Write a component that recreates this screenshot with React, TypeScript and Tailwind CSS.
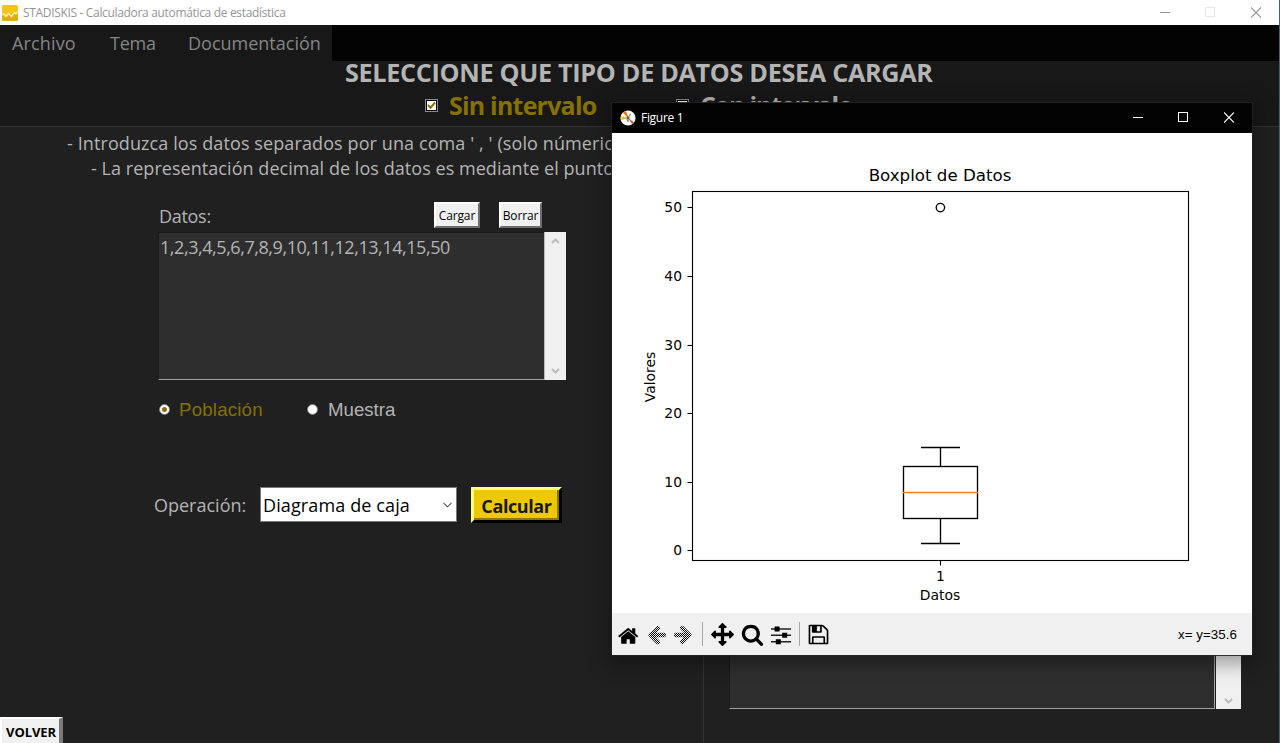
import React from "react";

const PATHS = {
  home: "M1408 992v480q0 26-19 45t-45 19h-384v-384h-256v384h-384q-26 0-45-19t-19-45v-480q0-1 .5-3t.5-3l575-474 575 474q1 2 1 6zm223-69l-62 74q-8 9-21 11h-3q-13 0-21-7l-692-577-692 577q-12 8-24 7-13-2-21-11l-62-74q-8-10-7-23.5t11-21.5l719-599q32-26 76-26t76 26l244 204v-195q0-14 9-23t23-9h192q14 0 23 9t9 23v408l219 182q10 8 11 21.5t-7 23.5z",
  arrow: "M1664 896v128q0 53-32.5 90.5t-84.5 37.5h-704l293 294q38 36 38 90t-38 90l-75 76q-37 37-90 37-52 0-91-37l-651-652q-37-37-37-90 0-52 37-91l651-650q38-38 91-38 52 0 90 38l75 74q38 38 38 91t-38 91l-293 293h704q52 0 84.5 37.5t32.5 90.5z",
  move: "M1792 896q0 26-19 45l-256 256q-19 19-45 19t-45-19-19-45v-128h-384v384h128q26 0 45 19t19 45-19 45l-256 256q-19 19-45 19t-45-19l-256-256q-19-19-19-45t19-45 45-19h128v-384h-384v128q0 26-19 45t-45 19-45-19l-256-256q-19-19-19-45t19-45l256-256q19-19 45-19t45 19 19 45v128h384v-384h-128q-26 0-45-19t-19-45 19-45l256-256q19-19 45-19t45 19l256 256q19 19 19 45t-19 45-45 19h-128v384h384v-128q0-26 19-45t45-19 45 19l256 256q19 19 19 45z",
  search: "M1216 832q0-185-131.5-316.5t-316.5-131.5-316.5 131.5-131.5 316.5 131.5 316.5 316.5 131.5 316.5-131.5 131.5-316.5zm512 832q0 52-38 90t-90 38q-54 0-90-38l-343-342q-179 124-399 124-143 0-273.5-55.5t-225-150-150-225-55.5-273.5 55.5-273.5 150-225 225-150 273.5-55.5 273.5 55.5 225 150 150 225 55.5 273.5q0 220-124 399l343 343q37 37 37 90z",
  save: "M512 1536h768v-384h-768v384zm896 0h128v-896q0-14-10-38.5t-20-34.5l-281-281q-10-10-34-20t-39-10v416q0 40-28 68t-68 28h-576q-40 0-68-28t-28-68v-416h-128v1280h128v-416q0-40 28-68t68-28h832q40 0 68 28t28 68v416zm-384-928v-320q0-13-9.5-22.5t-22.5-9.5h-192q-13 0-22.5 9.5t-9.5 22.5v320q0 13 9.5 22.5t22.5 9.5h192q13 0 22.5-9.5t9.5-22.5zm640 32v928q0 40-28 68t-68 28h-1344q-40 0-68-28t-28-68v-1344q0-40 28-68t68-28h928q40 0 88 20t76 48l280 280q28 28 48 76t20 88z",
};

function ToolIcon({ d, className }: { d: string; className: string }) {
  return (
    <svg viewBox="0 0 1792 1792" className={className} fill="#000">
      <path d={d} />
    </svg>
  );
}

/* Disabled navigation arrow, stippled one pixel on, one pixel off */
function StippledArrow({ flip, id }: { flip?: boolean; id: string }) {
  const dots: string[] = [];
  for (let y = 0; y < 22; y++) {
    for (let x = y % 2; x < 22; x += 2) dots.push(`M${x} ${y}h1v1h-1z`);
  }
  return (
    <svg width="22" height="22" viewBox="0 0 22 22" className="shrink-0">
      <clipPath id={id}>
        <path d={PATHS.arrow} transform={flip ? "translate(21 -0.5) scale(-0.0120 0.0120)" : "translate(1 -0.5) scale(0.0120)"} />
      </clipPath>
      <g clipPath={`url(#${id})`}>
        <path d={dots.join("")} shapeRendering="crispEdges" />
      </g>
    </svg>
  );
}

function WindowButtons({ stroke, muted, className }: { stroke: string; muted: string; className: string }) {
  return (
    <div className={className}>
      <svg width="10" height="11" shapeRendering="crispEdges"><path d="M0 5.5h10" stroke={stroke} /></svg>
      <svg width="10" height="11" shapeRendering="crispEdges" className="ml-[35px]"><rect x=".5" y=".5" width="9" height="9" fill="none" stroke={muted} /></svg>
      <svg width="10" height="11" className="ml-9"><path d="M0 .5l10 10M10 .5l-10 10" stroke={stroke} strokeWidth="1.1" /></svg>
    </div>
  );
}

function ScrollArrow({ down }: { down?: boolean }) {
  return (
    <svg width="9" height="8" viewBox="0 0 9 8" fill="none" stroke="#bdbdbd" strokeWidth="2">
      <path d={down ? "M1 2l3.5 3.5L8 2" : "M1 6l3.5-3.5L8 6"} />
    </svg>
  );
}

const TICKS = [
  { v: 50, y: 74.5 },
  { v: 40, y: 143.5 },
  { v: 30, y: 212.5 },
  { v: 20, y: 280.5 },
  { v: 10, y: 349.5 },
  { v: 0, y: 417.5 },
];

function Boxplot() {
  return (
    <svg width="640" height="480" viewBox="0 0 640 480" className="block bg-white font-['DejaVu_Sans',sans-serif]">
      <g fill="none" stroke="#000" strokeWidth="1.1">
        <rect x="80.5" y="58.5" width="496" height="369" />
        {TICKS.map((t) => (
          <path key={t.v} d={`M75.5 ${t.y}h5`} />
        ))}
        <path d="M328.5 427.5v5" />
      </g>
      <g fill="none" stroke="#000" strokeWidth="1.35">
        <rect x="291.5" y="333.5" width="74" height="52" />
        <path d="M328.5 333.5v-19M309 314.5h39M328.5 385.5v25M309 410.5h39" />
        <circle cx="328.4" cy="74.6" r="4.2" />
      </g>
      <path d="M291 359.5h75" stroke="#ff7f0e" strokeWidth="1.35" />
      <g fontSize="13.89" textAnchor="end" fill="#000">
        {TICKS.map((t) => (
          <text key={t.v} x="70" y={t.y + 4.9}>{t.v}</text>
        ))}
      </g>
      <g fontSize="13.89" textAnchor="middle" fill="#000">
        <text x="328.5" y="448">1</text>
        <text x="328" y="467">Datos</text>
        <text transform="translate(43 244) rotate(-90)">Valores</text>
        <text x="328" y="48.400" fontSize="16.67">Boxplot de Datos</text>
      </g>
    </svg>
  );
}

function FigureWindow() {
  return (
    <div className="absolute left-[612px] top-[103px] flex w-[640px] flex-col shadow-[0_0_0_1px_rgba(34,34,34,0.9),0_5px_18px_4px_rgba(0,0,0,0.35)]">
      <div className="flex h-[30px] items-center justify-between bg-[#030303] pl-2 pr-[18px]">
        <div className="flex items-center gap-[5px]">
          <svg width="16" height="16" viewBox="0 0 16 16">
            <circle cx="8" cy="8" r="7.6" fill="#fff" />
            <path d="M8.500 8L2.800 2.800 6 1z" fill="#f26b12" />
            <path d="M8 8L1.200 6.300 1.500 9.900z" fill="#f5b800" />
            <path d="M8 8l6 4.400-1.800 1.600z" fill="#d9480f" />
            <path d="M8 8l2-4.500 1.300 1z" fill="#6ba539" />
            <path d="M8 8l-1 3.500 1.600.2z" fill="#2f7a4a" />
            <path d="M5.500 8h5M8 5.500v5M6.500 6.500l3 3M9.500 6.500l-3 3" stroke="#444" strokeWidth=".6" />
          </svg>
          <span className="text-[12px] leading-[30px] tracking-[-0.3px] text-white">Figure 1</span>
        </div>
        <WindowButtons stroke="#fff" muted="#fff" className="flex pb-px" />
      </div>
      <Boxplot />
      <div className="flex h-[42px] items-center bg-[#f0f0f0] pl-[5px] pr-[15px]">
        <ToolIcon d={PATHS.home} className="ml-px mt-[3px] size-[22px] shrink-0" />
        <div className="ml-[5px] mt-px flex gap-[6px]">
          <StippledArrow id="back" />
          <StippledArrow id="forward" flip />
        </div>
        <div className="ml-[7px] h-6 w-px bg-[#a6a6a6]" />
        <ToolIcon d={PATHS.move} className="ml-2 size-[23px] shrink-0" />
        <ToolIcon d={PATHS.search} className="ml-[7px] size-[23px] shrink-0" />
        <svg width="20" height="20" viewBox="0 0 20 20" className="ml-[7px] mt-px shrink-0">
          <path d="M0 4h20M0 10.200h20M0 16.800h20" stroke="#222" strokeWidth="1.600" />
          <path d="M3.600 1.500h5v5h-5zM11.200 7.700h5v5h-5zM4.800 14.300h5v5h-5z" />
        </svg>
        <div className="ml-[8px] h-6 w-px bg-[#a6a6a6]" />
        <ToolIcon d={PATHS.save} className="ml-[7px] size-[23px] shrink-0" />
        <span className="ml-auto pt-px font-['Liberation_Sans',sans-serif] text-[13.33px] tracking-[0.05px] text-black">x= y=35.6</span>
      </div>
    </div>
  );
}

function RaisedButton({ children, className }: { children: React.ReactNode; className: string }) {
  return (
    <button className={"h-[26px] border-2 border-b-[#6d6d6d] border-l-white border-r-[#6d6d6d] border-t-white bg-[#f0f0f0] text-[12px] leading-[21px] tracking-[-0.15px] text-black " + className}>
      {children}
    </button>
  );
}

function TitleBar() {
  return (
    <div className="flex h-[25px] items-center justify-between bg-white pl-[2px] pr-[18px]">
      <div className="flex items-center gap-[5px]">
        <svg width="16" height="16" viewBox="0 0 16 16">
          <rect width="16" height="16" rx="1.5" fill="#f2c511" />
          <path d="M0 10l3 2 3-2 3 2 3-2.500L16 7v7.500q0 1.500-1.500 1.500h-13Q0 16 0 14.500z" fill="#dcae10" />
          <path d="M0 9l2 0 2 2.500 2.500-3 3 3 3-4 1.500 1.500 2-3" fill="none" stroke="#fff3b0" strokeWidth="1.300" />
        </svg>
        <span className="text-[12px] leading-[25px] tracking-[-0.33px] text-[#959595]">STADISKIS - Calculadora automática de estadística</span>
      </div>
      <WindowButtons stroke="#959595" muted="#e6e6e6" className="flex pb-px" />
    </div>
  );
}

export default function App() {
  return (
    <div className="relative h-[743px] w-[1280px] overflow-hidden whitespace-nowrap border-r border-[#3f6570] bg-[#202020] font-['Open_Sans',sans-serif] text-[18px] text-[#b4b4b4]">
      <div className="flex h-full flex-col">
        <TitleBar />
        <div className="flex h-9 shrink-0 bg-[#030303] leading-9 text-[#858585]">
          <div className="flex w-[332px] bg-[#181818] pl-3">
            <span className="w-[98px] tracking-[0.15px]">Archivo</span>
            <span className="w-[78px] tracking-[-0.2px]">Tema</span>
            <span>Documentación</span>
          </div>
        </div>
        <div className="flex h-[66px] shrink-0 flex-col border-b border-[#333] bg-[#181818] font-bold">
          <h1 className="pl-[345px] text-[25.2px] leading-[23px] tracking-[-0.31px]">SELECCIONE QUE TIPO DE DATOS DESEA CARGAR</h1>
          <div className="flex h-[42px] items-center pl-[425px] text-[25px]">
            <span className="flex size-[13px] items-center justify-center border border-[#8a8a8a] bg-white outline-1 -outline-offset-2 outline-black">
              <svg width="9" height="9" viewBox="0 0 9 9"><path d="M1 4l2.500 2.800L8 1.500" fill="none" stroke="#857000" strokeWidth="2" /></svg>
            </span>
            <span className="ml-[11px] w-[227px] pt-px tracking-[-0.8px] text-[#857000]">Sin intervalo</span>
            <span className="size-[13px] border border-[#8a8a8a] bg-white outline-1 -outline-offset-2 outline-black" />
            <span className="ml-[11px] pt-px tracking-[-1.2px]">Con intervalo</span>
          </div>
        </div>
        <div className="flex min-h-0 flex-1">
          <div className="flex w-[704px] shrink-0 flex-col border-r border-[#333]">
            <div className="pt-[4px] leading-[25px]">
              <p className="pl-[67px] tracking-[0.1px]">- Introduzca los datos separados por una coma ' , ' (solo númericos)</p>
              <p className="pl-[91px] tracking-[0.05px]">- La representación decimal de los datos es mediante el punto</p>
            </div>
            <div className="mt-[21px] flex h-[30px] items-start pl-[159px]">
              <span className="w-[275px] leading-[28px] tracking-[-0.3px]">Datos:</span>
              <RaisedButton className="w-[46px]">Cargar</RaisedButton>
              <RaisedButton className="ml-[19px] w-[43px]">Borrar</RaisedButton>
            </div>
            <div className="ml-[158px] flex h-[148px] w-[408px]">
              <div className="w-[386px] border-b border-l border-t border-b-[#a0a0a0] border-l-[#191919] border-t-[#191919] bg-[#2e2e2e] pl-px leading-[28px] tracking-[-0.44px]">
                1,2,3,4,5,6,7,8,9,10,11,12,13,14,15,50
              </div>
              <div className="flex w-[22px] flex-col items-center justify-between border-l border-l-[#bbb] bg-[#f0f0f0] py-[5px]">
                <ScrollArrow />
                <ScrollArrow down />
              </div>
            </div>
            <div className="mt-[17px] flex h-6 items-center pl-[159px] font-['Liberation_Sans',sans-serif] text-[18.67px]">
              <span className="flex size-[11px] items-center justify-center rounded-full border border-[#777] bg-white"><span className="size-[5px] rounded-full bg-[#857000]" /></span>
              <span className="ml-[9px] w-[129px] pt-px tracking-[0.2px] text-[#857000]">Población</span>
              <span className="-ml-px size-[11px] rounded-full border border-[#777] bg-white" />
              <span className="ml-[10px] pt-px">Muestra</span>
            </div>
            <div className="mt-[66px] flex h-9 items-start pl-[154px]">
              <span className="w-[106px] leading-9">Operación:</span>
              <div className="flex h-[35px] w-[197px] items-center justify-between border border-[#7a7a7a] bg-white pl-[2px] pr-[4px] leading-[33px] tracking-[0.12px] text-black">
                <span className="pt-px">Diagrama de caja</span>
                <svg width="9" height="6" viewBox="0 0 9 6"><path d="M.5 .8l4 4 4-4" fill="none" stroke="#555" strokeWidth="1.100" /></svg>
              </div>
              <button className="ml-[14px] h-9 w-[91px] border-[3px] border-b-black border-l-[#ffff80] border-r-black border-t-[#ffff80] bg-[#eec900] pt-px font-bold leading-[30px] tracking-[-0.4px] text-[#181818] shadow-[inset_-2px_-2px_0_#8e7800]">
                Calcular
              </button>
            </div>
            <button className="mt-auto h-[26px] w-[63px] border-l-2 border-r-4 border-t-2 border-l-white border-r-[#7a7a7a] border-t-white bg-[#f0f0f0] pl-px pt-px text-[13px] font-bold leading-[24px] tracking-[-0.1px] text-black">
              VOLVER
            </button>
          </div>
          <div className="flex h-[582px] pl-[25px]">
            <div className="w-[486px] border-b border-l border-r border-b-[#a0a0a0] border-l-[#191919] border-r-[#a0a0a0] bg-[#2e2e2e]" />
            <div className="ml-px flex w-[25px] flex-col items-center justify-end bg-[#f0f0f0] pb-[4px]">
              <ScrollArrow down />
            </div>
          </div>
        </div>
      </div>
      <FigureWindow />
    </div>
  );
}
